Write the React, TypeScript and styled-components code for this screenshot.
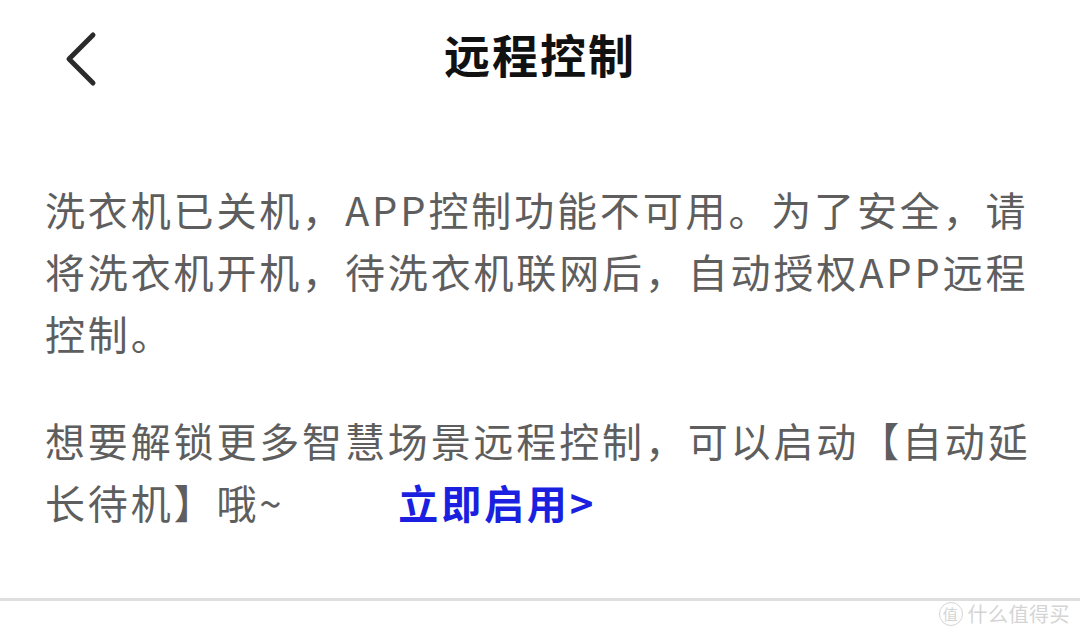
import * as React from 'react';
import styled, { createGlobalStyle } from 'styled-components';

const GlobalStyle = createGlobalStyle`
  html, body {
    margin: 0;
    padding: 0;
    background: #ffffff;
  }
  body {
    font-family: 'Noto Sans CJK SC', 'Noto Sans', sans-serif;
  }
`;

const Page = styled.div`
  position: relative;
  width: 1080px;
  height: 638px;
  background: #ffffff;
  display: flex;
  flex-direction: column;
  overflow: hidden;
`;

const Header = styled.header`
  height: 106px;
  display: grid;
  grid-template-columns: 1fr auto 1fr;
  align-items: center;
`;

const BackButton = styled.button`
  justify-self: start;
  display: flex;
  align-items: center;
  margin: 12px 0 0 58px;
  padding: 0;
  border: none;
  background: none;
  cursor: pointer;
`;

const Title = styled.h1`
  margin: 0;
  font-size: 46px;
  font-weight: 700;
  letter-spacing: 2px;
  color: #111111;
  line-height: 1;
`;

const Content = styled.main`
  flex: 1;
  padding: 72px 45px 0;
`;

const Paragraph = styled.p<{ $gap?: number }>`
  margin: ${(p) => p.$gap ?? 0}px 0 0;
  font-size: 40px;
  line-height: 62px;
  letter-spacing: 2.85px;
  color: #5e5e5e;
`;

const ActionLink = styled.a`
  display: inline-block;
  margin-left: 114px;
  font-weight: 700;
  color: #1a1fe0;
  text-decoration: none;
  cursor: pointer;
`;

const Divider = styled.hr`
  margin: 0 0 37px;
  border: none;
  height: 3px;
  background: #dedede;
`;

const Watermark = styled.div`
  position: absolute;
  right: 10px;
  bottom: 10px;
  display: flex;
  align-items: center;
  gap: 5px;
  font-size: 20px;
  color: #d4d4d4;
  letter-spacing: 0.5px;
`;

const Badge = styled.span`
  width: 22px;
  height: 22px;
  border: 1.5px solid #d4d4d4;
  border-radius: 50%;
  display: flex;
  align-items: center;
  justify-content: center;
  font-size: 15px;
`;

const BackIcon = () => (
  <svg width="40" height="60" viewBox="0 0 40 60">
    <polyline
      points="35,6 11,30 35,54"
      fill="none"
      stroke="#2b2b2b"
      strokeWidth="5"
      strokeLinecap="round"
      strokeLinejoin="round"
    />
  </svg>
);

const App = () => {
  return (
    <Page>
      <GlobalStyle />
      <Header>
        <BackButton aria-label="返回">
          <BackIcon />
        </BackButton>
        <Title>远程控制</Title>
        <div />
      </Header>
      <Content>
        <Paragraph>
          洗衣机已关机，APP控制功能不可用。为了安全，请将洗衣机开机，待洗衣机联网后，自动授权APP远程控制。
        </Paragraph>
        <Paragraph $gap={45}>
          <span>想要解锁更多智慧场景远程控制，可以启动【自动延长待机】哦~</span>
          <ActionLink>立即启用&gt;</ActionLink>
        </Paragraph>
      </Content>
      <Divider />
      <Watermark>
        <Badge>值</Badge>
        <span>什么值得买</span>
      </Watermark>
    </Page>
  );
};

export default App;
